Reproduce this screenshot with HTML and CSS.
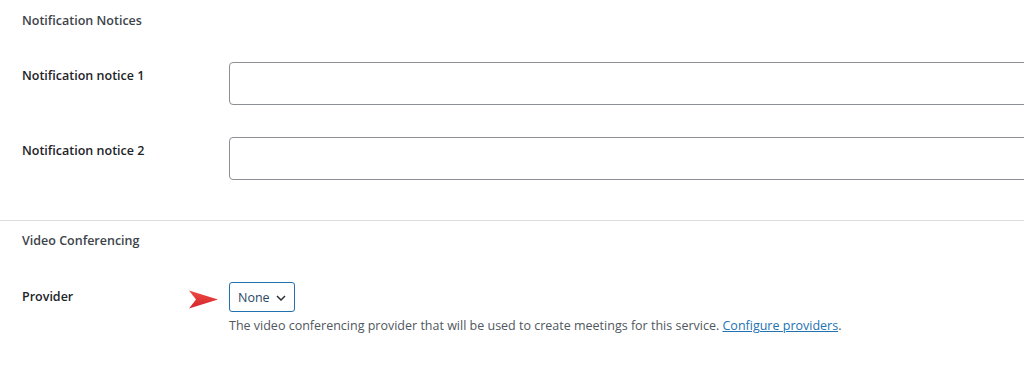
FILE: index.html
```html
<!DOCTYPE html>
<html>
<head>
<meta charset="utf-8">
<link rel="stylesheet" href="styles.css">
</head>
<body>
<div class="page">
  <section class="section first">
    <h2 class="section-title">Notification Notices</h2>
    <div class="row">
      <label class="label">Notification notice 1</label>
      <div class="field"><input class="text-input" type="text"></div>
    </div>
    <div class="row">
      <label class="label">Notification notice 2</label>
      <div class="field"><input class="text-input" type="text"></div>
    </div>
  </section>
  <section class="section second">
    <h2 class="section-title">Video Conferencing</h2>
    <div class="row provider-row">
      <label class="label">Provider</label>
      <div class="field">
        <div class="select-wrap">
          <svg class="pointer" width="30" height="20" viewBox="0 0 30 20"><defs><linearGradient id="g" x1="0" y1="0" x2="0" y2="1"><stop offset="0" stop-color="#ef4a45"/><stop offset="1" stop-color="#d3262a"/></linearGradient></defs><path d="M0 0.5 L29 9.5 L0 18.5 L7 9.5 Z" fill="url(#g)"/></svg>
          <div class="select">None <svg class="chev" width="10" height="6" viewBox="0 0 10 6"><path d="M1 1 L5 5 L9 1" fill="none" stroke="#2c3338" stroke-width="1.5"/></svg></div>
        </div>
        <p class="desc">The video conferencing provider that will be used to create meetings for this service. <a href="#">Configure providers</a>.</p>
      </div>
    </div>
  </section>
</div>
</body>
</html>
```
FILE: styles.css
```css
html, body { margin: 0; padding: 0; background: #fff; }
body { font-family: "Open Sans", "Noto Sans", sans-serif; color: #1d2327; font-size: 12.5px; overflow: hidden; }
.page { width: 1024px; overflow: hidden; }
.section { padding-left: 22px; }
.first { padding-top: 12px; padding-bottom: 40px; border-bottom: 1px solid #dcdcde; }
.section-title { margin: 0; font-size: 12.5px; font-weight: 600; color: #3c434a; line-height: 18px; }
.row { display: flex; align-items: flex-start; }
.first .row { margin-top: 32px; }
.label { flex: 0 0 207px; font-weight: 600; font-size: 12.5px; line-height: 18px; padding-top: 5px; color: #1d2327; }
.field { flex: 1; min-width: 0; }
.text-input { display: block; box-sizing: border-box; width: 820px; height: 43px; border: 1px solid #8c8f94; border-radius: 4px; margin: 0; padding: 0; background: #fff; }
.second { padding-top: 11px; }
.provider-row { margin-top: 32px; }
.provider-row .label { padding-top: 6px; }
.select-wrap { position: relative; }
.pointer { position: absolute; left: -40px; top: 8px; }
.select { display: inline-flex; align-items: center; gap: 6px; box-sizing: border-box; height: 30px; padding: 0 8px 0 8px; border: 1.5px solid #2271b1; border-radius: 3px; color: #2a4866; font-size: 12.5px; }
.chev { margin-top: 1px; }
.desc { margin: 4px 0 0; color: #50575e; font-size: 12.5px; line-height: 20px; }
.desc a { color: #2271b1; }
```
